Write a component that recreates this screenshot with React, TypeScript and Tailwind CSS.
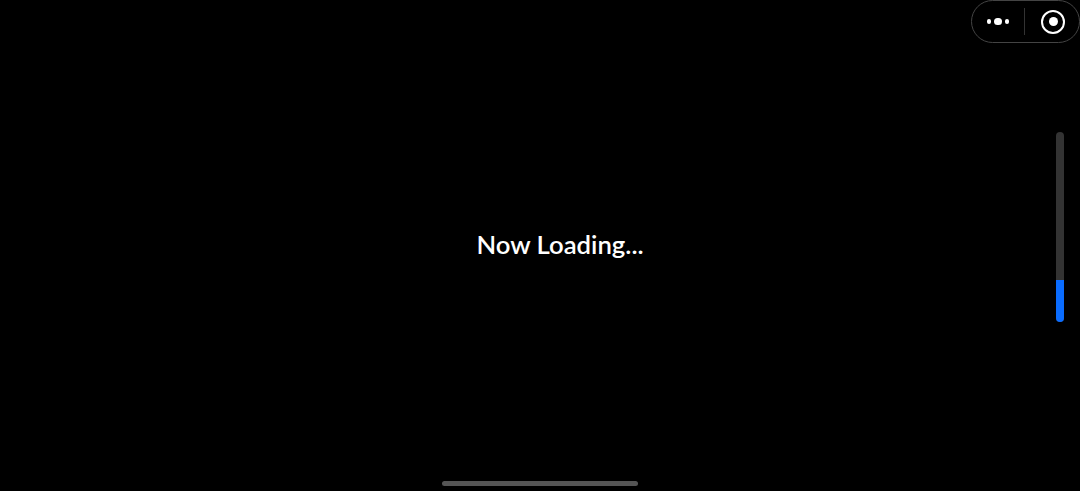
export default function App() {
  return (
    <div className="relative flex h-[491px] w-full items-center justify-center overflow-hidden bg-black pb-[2px] pl-[40px]">
      <p className="text-[25.7px] leading-none font-semibold text-white [font-family:Lato,sans-serif]">
        Now Loading...
      </p>

      {/* mini program capsule */}
      <div className="absolute top-0 right-0 flex h-[43px] w-[109px] items-center rounded-[22px] border border-[#444444] bg-black">
        <div className="flex w-[52px] items-center justify-center gap-[3px]">
          <span className="size-[4.5px] rounded-full bg-white" />
          <span className="size-[7.5px] rounded-full bg-white" />
          <span className="size-[4.5px] rounded-full bg-white" />
        </div>
        <div className="h-[27px] w-px bg-[#333333]" />
        <div className="flex flex-1 items-center justify-center pl-[2px]">
          <div className="flex size-[24px] items-center justify-center rounded-full border-2 border-white">
            <span className="size-[9px] rounded-full bg-white" />
          </div>
        </div>
      </div>

      {/* loading progress */}
      <div className="absolute top-[132px] right-[16px] flex h-[190px] w-[8px] flex-col justify-end overflow-hidden rounded-full bg-[#333333]">
        <div className="h-[42px] w-full bg-[#0a6cff]" />
      </div>

      {/* home indicator */}
      <div className="absolute bottom-[5px] left-[442px] h-[5px] w-[196px] rounded-full bg-[#555555]" />
    </div>
  );
}
